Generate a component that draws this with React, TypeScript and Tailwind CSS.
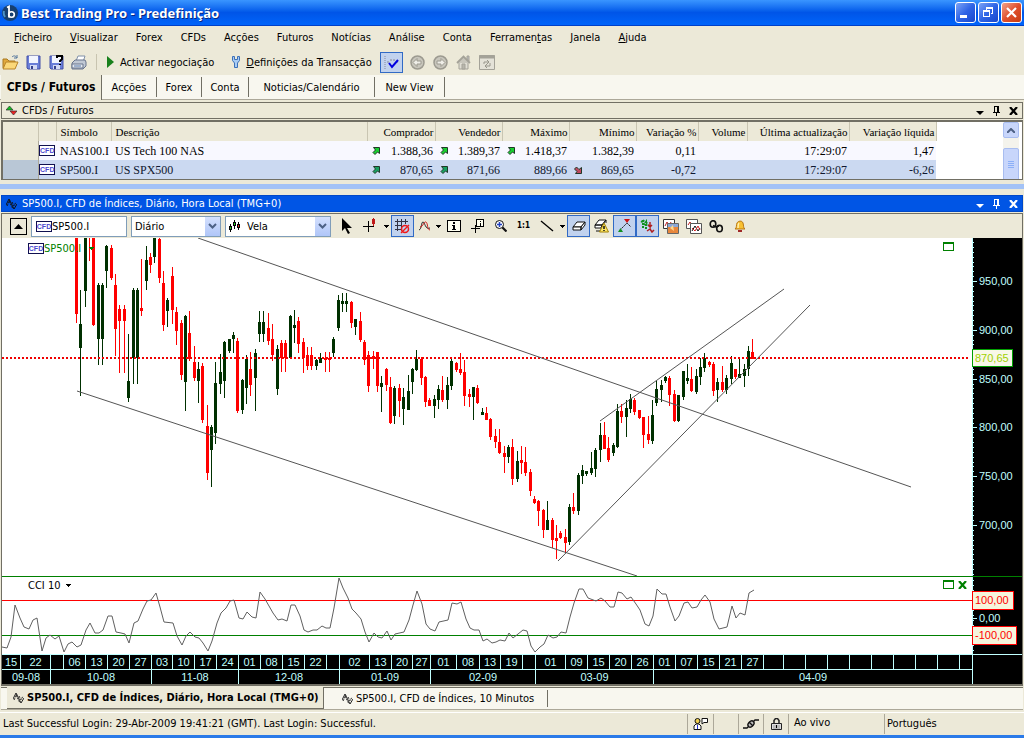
import React from 'react';
import clsx from 'clsx';

// x, high, body top, body bottom, low, rising
type Candle = [number, number, number, number, number, 0 | 1];

const CANDLES: Candle[] = [
  [76, 238, 238, 314, 323, 0], [80, 290, 324, 348, 396, 1], [85, 238, 238, 291, 307, 1], [89, 238, 238, 238, 261, 0],
  [93, 238, 238, 325, 326, 0], [98, 283, 285, 339, 365, 1], [102, 283, 285, 339, 365, 1], [106, 245, 246, 271, 288, 1],
  [111, 245, 248, 278, 280, 0], [115, 274, 285, 329, 356, 0], [119, 305, 309, 321, 373, 0], [124, 305, 309, 321, 373, 0],
  [128, 334, 381, 398, 402, 1], [133, 288, 290, 358, 384, 1], [137, 288, 290, 358, 384, 1], [141, 259, 308, 311, 316, 0],
  [146, 246, 260, 281, 290, 1], [150, 253, 257, 265, 273, 0], [154, 238, 238, 257, 263, 1], [159, 238, 239, 278, 283, 0],
  [163, 271, 283, 325, 331, 0], [167, 298, 300, 311, 327, 1], [172, 267, 276, 310, 324, 0], [176, 307, 312, 331, 345, 0],
  [181, 320, 323, 375, 380, 0], [185, 315, 316, 382, 411, 1], [189, 311, 333, 359, 361, 0], [194, 346, 362, 378, 381, 0],
  [198, 362, 369, 381, 403, 1], [202, 363, 366, 420, 423, 0], [207, 405, 426, 473, 480, 0], [211, 425, 427, 450, 487, 1],
  [215, 362, 383, 433, 444, 1], [220, 354, 372, 384, 394, 1], [224, 341, 342, 381, 398, 1], [229, 339, 339, 351, 353, 1],
  [233, 332, 335, 339, 353, 1], [237, 338, 341, 411, 413, 0], [242, 379, 380, 410, 414, 1], [246, 355, 359, 388, 404, 1],
  [250, 352, 369, 385, 396, 0], [255, 349, 353, 378, 411, 1], [259, 311, 322, 334, 342, 1], [263, 311, 322, 334, 342, 1],
  [268, 313, 328, 341, 345, 0], [272, 324, 339, 355, 361, 0], [277, 345, 349, 389, 395, 1], [281, 340, 343, 358, 372, 0],
  [285, 340, 343, 358, 372, 0], [290, 315, 316, 358, 359, 1], [294, 310, 325, 328, 343, 1], [298, 317, 321, 344, 353, 0],
  [303, 338, 342, 358, 373, 0], [307, 347, 355, 366, 370, 0], [311, 347, 355, 366, 370, 0], [316, 359, 360, 366, 370, 1],
  [320, 353, 358, 363, 363, 1], [325, 352, 358, 360, 372, 0], [329, 352, 358, 360, 372, 0], [333, 337, 339, 353, 357, 1],
  [338, 295, 300, 328, 331, 1], [342, 293, 301, 304, 312, 1], [346, 293, 301, 304, 312, 1], [351, 301, 302, 323, 328, 0],
  [355, 319, 319, 327, 335, 1], [360, 312, 321, 340, 342, 0], [364, 340, 342, 360, 365, 0], [368, 351, 355, 386, 392, 0],
  [373, 351, 356, 359, 369, 0], [377, 352, 352, 386, 392, 0], [381, 376, 383, 387, 412, 1], [386, 368, 369, 385, 391, 0],
  [390, 377, 387, 423, 424, 0], [394, 386, 388, 416, 424, 1], [399, 384, 388, 401, 417, 0], [403, 388, 397, 409, 425, 1],
  [408, 375, 391, 410, 410, 1], [412, 368, 369, 382, 394, 1], [416, 350, 359, 370, 371, 1], [421, 357, 359, 378, 385, 0],
  [425, 376, 377, 402, 407, 0], [429, 398, 400, 406, 406, 0], [434, 395, 399, 406, 418, 1], [438, 385, 389, 400, 409, 1],
  [442, 376, 390, 400, 402, 0], [447, 377, 385, 400, 409, 1], [451, 359, 361, 386, 390, 1], [456, 362, 363, 370, 372, 0],
  [460, 353, 369, 373, 375, 0], [464, 360, 372, 396, 406, 0], [469, 389, 394, 397, 407, 0], [473, 387, 387, 397, 420, 1],
  [477, 385, 388, 403, 404, 0], [482, 408, 412, 415, 415, 1], [486, 407, 413, 420, 420, 0], [490, 418, 419, 437, 440, 0],
  [495, 429, 436, 442, 448, 0], [499, 429, 442, 453, 454, 0], [504, 446, 453, 457, 473, 0], [508, 445, 447, 457, 463, 1],
  [512, 439, 447, 479, 485, 0], [517, 451, 461, 479, 482, 1], [521, 446, 460, 463, 474, 0], [525, 447, 462, 473, 476, 0],
  [530, 469, 472, 491, 496, 0], [534, 496, 499, 503, 504, 0], [538, 500, 501, 511, 526, 0], [543, 509, 510, 530, 538, 0],
  [547, 501, 520, 530, 530, 1], [552, 518, 520, 540, 548, 0], [556, 525, 538, 541, 559, 0], [560, 531, 533, 538, 539, 0],
  [565, 529, 537, 543, 553, 0], [569, 504, 507, 542, 545, 1], [573, 493, 507, 511, 514, 0], [578, 473, 475, 511, 515, 1],
  [582, 465, 470, 476, 484, 1], [586, 471, 471, 474, 476, 1], [591, 452, 468, 473, 475, 1], [595, 448, 450, 469, 477, 1],
  [600, 423, 435, 450, 462, 1], [604, 422, 435, 449, 449, 0], [608, 437, 448, 460, 462, 0], [613, 443, 445, 453, 456, 1],
  [617, 404, 411, 447, 448, 1], [621, 404, 411, 417, 423, 0], [626, 400, 408, 417, 437, 1], [630, 394, 399, 409, 413, 1],
  [634, 398, 400, 412, 415, 0], [639, 410, 410, 418, 419, 0], [643, 417, 417, 435, 448, 0], [648, 416, 434, 440, 444, 0],
  [652, 400, 415, 441, 444, 1], [656, 381, 389, 403, 406, 1], [661, 380, 385, 390, 402, 1], [665, 376, 377, 381, 383, 1],
  [669, 376, 378, 395, 406, 0], [674, 390, 394, 421, 422, 0], [678, 395, 395, 421, 422, 1], [683, 371, 371, 397, 400, 1],
  [687, 364, 378, 381, 384, 1], [691, 367, 379, 391, 392, 0], [696, 369, 376, 392, 394, 1], [700, 358, 367, 377, 385, 1],
  [704, 353, 358, 368, 372, 1], [709, 361, 362, 365, 367, 0], [713, 362, 364, 391, 396, 0], [717, 378, 382, 390, 402, 1],
  [722, 366, 382, 390, 392, 0], [726, 375, 378, 390, 394, 1], [731, 356, 363, 379, 384, 1], [735, 369, 369, 377, 379, 0],
  [739, 359, 374, 378, 378, 1], [744, 364, 369, 376, 387, 1], [748, 346, 351, 369, 376, 1], [752, 339, 352, 359, 359, 0],
];

const CCI_POINTS =
  '2,647 7,648 11,637 15,605 20,618 24,627 29,629 33,620 37,618 42,651 46,638 50,635 55,639 59,636 64,652 68,644 72,642 77,647 ' +
  '81,645 86,630 90,623 95,633 99,633 103,630 108,616 112,616 116,632 121,633 125,634 129,643 134,623 138,621 143,609 147,601 ' +
  '151,600 156,593 160,607 164,622 173,623 177,636 182,645 186,636 190,632 195,637 199,638 203,643 208,651 212,641 217,623 ' +
  '221,613 226,608 230,601 234,600 239,618 243,619 247,612 252,617 256,618 260,592 265,599 269,606 273,613 278,620 282,619 ' +
  '287,621 291,605 295,605 300,616 304,630 308,632 313,630 317,630 322,626 326,628 330,628 334,608 339,578 343,588 348,598 ' +
  '352,609 356,613 361,619 365,632 369,642 374,633 378,637 382,638 387,631 391,640 395,634 404,632 409,620 413,605 417,591 ' +
  '422,604 426,624 430,629 435,631 439,622 448,620 452,603 457,604 461,602 466,619 470,628 474,630 479,630 483,641 487,639 ' +
  '492,643 496,642 500,640 505,641 509,633 513,638 518,634 523,630 527,631 531,646 535,652 540,647 544,644 548,635 553,638 ' +
  '557,637 561,632 566,633 570,617 574,603 579,589 583,589 588,598 596,601 601,598 605,601 610,607 614,607 618,592 622,593 ' +
  '627,599 631,597 636,604 640,610 645,624 649,626 653,616 657,589 662,594 666,594 670,607 675,621 679,616 684,603 688,602 ' +
  '692,608 697,607 701,600 705,595 710,602 714,619 719,629 723,628 727,627 732,606 736,618 740,613 745,615 749,593 754,590';

// label, width
const WEEKS: [string, number][] = [
  ['15', 19], ['22', 30], ['', 13], ['06', 22], ['13', 22], ['20', 22], ['27', 22], ['03', 21], ['10', 22], ['17', 22],
  ['24', 22], ['01', 22], ['08', 22], ['15', 22], ['22', 22], ['', 13], ['02', 30], ['13', 22], ['20', 21], ['27', 18],
  ['01', 26], ['08', 23], ['13', 21], ['19', 22], ['', 13], ['01', 30], ['09', 22], ['15', 22], ['20', 22], ['26', 22],
  ['01', 22], ['07', 22], ['15', 22], ['21', 22], ['27', 22], ['', 20], ['', 22], ['', 22], ['', 22], ['', 22], ['', 22],
  ['', 22], ['', 22], ['', 22],
];

const MONTHS: [string, number][] = [
  ['09-08', 49], ['10-08', 101], ['11-08', 87], ['12-08', 101], ['01-09', 91], ['02-09', 105], ['03-09', 118],
];

const MENU: [string, string, string][] = [
  ['', 'F', 'icheiro'], ['', 'V', 'isualizar'], ['Forex', '', ''], ['CFDs', '', ''], ['Acções', '', ''], ['Futuros', '', ''],
  ['Notícias', '', ''], ['Análise', '', ''], ['Conta', '', ''], ['Ferramen', 't', 'as'], ['', 'J', 'anela'], ['', 'A', 'juda'],
];

const Caret = ({ className }: { className?: string }) => (
  <svg width="5" height="3" viewBox="0 0 5 3" className={className} shapeRendering="crispEdges">
    <path d="M0 0h5v1H4v1H3v1H2V2H1V1H0z" fill="currentColor" />
  </svg>
);

const WaveIcon = ({ color = '#000' }: { color?: string }) => (
  <svg width="11" height="12" viewBox="0 0 11 12" fill="none" stroke={color}>
    <path d="M0 7l3-6 2 4 3 6 3-5" />
    <path d="M1 8l3-6M3 3l4 8M6 4l2 4 2-4" strokeDasharray="2 1" />
  </svg>
);

const CfdBadge = () => (
  <span className="inline-flex h-[11px] w-4 shrink-0 items-center justify-center border border-[#101050] bg-white text-[7px] leading-none font-bold text-[#4a4ad0] font-['Liberation_Sans',sans-serif]">
    CFD
  </span>
);

const Arrow = ({ down, dim }: { down?: boolean; dim?: boolean }) => (
  <svg width="8" height="8" viewBox="0 0 8 8" className={down ? 'rotate-90' : ''} aria-hidden="true">
    <path d="M1.500 0.500h6v6l-2-1.500-2.500 2.500-2-2L3.500 3z" fill={down ? '#c04860' : dim ? '#18a060' : '#18d030'} stroke="#203828" />
  </svg>
);

const PanelButtons = () => (
  <div className="flex items-center gap-2 pr-1">
    <button aria-label="Opções" className="flex w-2 justify-center pt-1">
      <svg width="8" height="4" viewBox="0 0 8 4"><path d="M0 0h8L4 4z" fill="currentColor" /></svg>
    </button>
    <button aria-label="Fixar">
      <svg width="9" height="10" viewBox="0 0 9 10" fill="currentColor" shapeRendering="crispEdges">
        <path d="M2 0h5v6h1v1H5v3H4V7H1V6h1zM3 1v5h2V1z" fillRule="evenodd" />
      </svg>
    </button>
    <button aria-label="Fechar">
      <svg width="9" height="8" viewBox="0 0 9 8" stroke="currentColor" strokeWidth="2.2"><path d="M1 0l7 8M8 0L1 8" /></svg>
    </button>
  </div>
);

const TitleBar = () => (
  <header className="flex h-[26px] items-center justify-between bg-linear-to-b from-[#3a95ff] via-[#0055e8] to-[#0064fa] border-b border-[#0040c8] pr-[2px] pl-[2px]">
    <div className="flex items-center gap-[3px]">
      <svg width="16" height="16" viewBox="0 0 16 16">
        <circle cx="8" cy="8" r="8" fill="#17406f" />
        <path d="M3 12a7 7 0 0 1-1-6" stroke="#4c93c8" strokeWidth="2" fill="none" />
        <path d="M5 2.500l2-1v11" stroke="#fff" strokeWidth="1.800" fill="none" />
        <circle cx="9.500" cy="9.500" r="2.800" stroke="#fff" strokeWidth="1.600" fill="none" />
      </svg>
      <h1 className="text-[13px] leading-4 font-bold text-white [text-shadow:1px_1px_#0a2a80] font-['Noto_Sans',sans-serif]">
        Best Trading Pro - Predefinição
      </h1>
    </div>
    <div className="flex gap-[2px]">
      <button aria-label="Minimizar" className="h-[21px] w-[21px] rounded-[3px] border border-white bg-linear-to-br from-[#7da2f5] via-[#2f64e6] to-[#1846cc]">
        <svg width="19" height="19" viewBox="0 0 19 19"><path d="M4 12h7v3H4z" fill="#fff" /></svg>
      </button>
      <button aria-label="Restaurar" className="h-[21px] w-[21px] rounded-[3px] border border-white bg-linear-to-br from-[#7da2f5] via-[#2f64e6] to-[#1846cc]">
        <svg width="19" height="19" viewBox="0 0 19 19" fill="#fff" fillRule="evenodd" shapeRendering="crispEdges">
          <path d="M4 7h7v7H4zM5 9v4h5V9z" />
          <path d="M7 4h7v7h-2v-1h1V6H8v1H7z" />
        </svg>
      </button>
      <button aria-label="Fechar janela" className="h-[21px] w-[21px] rounded-[3px] border border-white bg-linear-to-br from-[#f0a088] via-[#e0502c] to-[#c83c10]">
        <svg width="19" height="19" viewBox="0 0 19 19"><path d="M5 5l9 9M14 5l-9 9" stroke="#fff" strokeWidth="2.200" /></svg>
      </button>
    </div>
  </header>
);

const FloppyIcon = ({ help }: { help?: boolean }) => (
  <svg width="15" height="15" viewBox="0 0 15 15">
    <path d="M1 1h13v13H2l-1-1z" fill="#6a7ed8" stroke="#4450a8" />
    <path d="M3 1h9v7H3z" fill="#f2f5ff" />
    <path d="M4 10h7v4H4z" fill="#d4daf4" />
    <path d="M5 11h2v3H5z" fill="#34408c" />
    {help && <path d="M8 3V1h5v3l-2 2v1M11 9v1" stroke="#000" strokeWidth="2" fill="none" />}
  </svg>
);

const MainToolbar = () => (
  <div className="flex h-[26px] items-center pl-[2px]">
    <button aria-label="Abrir" className="w-6">
      <svg width="17" height="15" viewBox="0 0 17 15">
        <path d="M1 13V4h4l2 2h6v7z" fill="#e0a83c" stroke="#a87820" />
        <path d="M1 14l3-7h12l-3 7z" fill="#fbd878" stroke="#b88428" />
        <path d="M10 2c2-2 4-1 5 1m0-3v3h-3" stroke="#50749c" fill="none" />
      </svg>
    </button>
    <button aria-label="Guardar" className="w-[23px]"><FloppyIcon /></button>
    <button aria-label="Guardar como" className="w-[22px]"><FloppyIcon help /></button>
    <button aria-label="Imprimir" className="w-6">
      <svg width="16" height="15" viewBox="0 0 16 15">
        <path d="M5 6l2-5h7l-2 6z" fill="#fff" stroke="#8090a8" />
        <path d="M1 8l3-3h10l1 2v4l-3 3H1z" fill="#c0c8d4" stroke="#68748c" />
        <path d="M1 9h11v4H1z" fill="#e4e9f0" stroke="#68748c" />
        <path d="M3 11h7" stroke="#5878a8" />
      </svg>
    </button>
    <span className="mx-px h-4 w-px bg-[#c8c4b0]" />
    <button className="flex items-center gap-[6px] pl-[9px]">
      <svg width="7" height="12" viewBox="0 0 7 12"><path d="M0 0l7 6-7 6z" fill="#18801c" /></svg>
      Activar negociação
    </button>
    <button className="flex items-center gap-[6px] pl-[18px]">
      <svg width="8" height="12" viewBox="0 0 8 12">
        <path d="M0.500 0.500h2v3h3v-3h2v4L5.500 7v4.500h-3V7L0.500 4.500z" fill="#a8ccf4" stroke="#3c70b8" />
      </svg>
      <span><u>D</u>efinições da Transacção</span>
    </button>
    <button aria-label="Confirmar" aria-pressed="true" className="ml-2 flex h-[21px] w-[23px] items-center justify-center border border-[#316ac5] bg-[#c1d2ee]">
      <svg width="17" height="15" viewBox="0 0 17 15" fill="none">
        <path d="M2 1v14" stroke="#889" strokeDasharray="1 1" /><path d="M4 7h3M13 7h3M7 5h6" stroke="#889" strokeDasharray="2 1" />
        <path d="M6 8l3 4 6-7" stroke="#0000e0" strokeWidth="2" />
      </svg>
    </button>
    <div className="ml-[7px] flex gap-2">
      <button aria-label="Anterior">
        <svg width="15" height="15" viewBox="0 0 15 15" stroke="#9c9a90">
          <circle cx="7.500" cy="7.500" r="6.500" fill="#c8c6bc" strokeWidth="1.500" />
          <path d="M3 7.500l4-4v2.500h4v3H7v2.500z" fill="#efeee8" />
        </svg>
      </button>
      <button aria-label="Seguinte">
        <svg width="15" height="15" viewBox="0 0 15 15" stroke="#9c9a90">
          <circle cx="7.500" cy="7.500" r="6.500" fill="#c8c6bc" strokeWidth="1.500" />
          <path d="M12 7.500l-4-4v2.500H4v3h4v2.500z" fill="#efeee8" />
        </svg>
      </button>
      <button aria-label="Início">
        <svg width="15" height="15" viewBox="0 0 15 15" stroke="#a4a298">
          <path d="M11 1h2v5h-2z" fill="#bbb" /><path d="M3 7h9v7H3z" fill="#e0ded4" />
          <path d="M1 8l6.500-6.500L14 8" fill="#c8c6bc" strokeWidth="1.800" /><path d="M6 9h3v5H6z" fill="#b8b6ac" />
        </svg>
      </button>
      <button aria-label="Actualizar">
        <svg width="16" height="15" viewBox="0 0 16 15" stroke="#a4a298" fill="none">
          <path d="M0.500 0.500h15v14h-15z" fill="#e4e2d8" /><path d="M0 2h16" strokeWidth="3" />
          <path d="M5 9V7h5m-2-2l2 2-2 2M11 8v3H6m2-2l-2 2 2 2" stroke="#98968c" />
        </svg>
      </button>
    </div>
  </div>
);

const VIEW_TABS = [
  { label: 'Acções', width: 'w-[55px]' },
  { label: 'Forex', width: 'w-[45px]' },
  { label: 'Conta', width: 'w-[47px]' },
  { label: 'Noticias/Calendário', width: 'w-[126px]' },
  { label: 'New View', width: 'w-[70px]' },
];

const ViewTabs = () => (
  <nav className="flex h-[25px] items-stretch border-b border-[#aca899] bg-[#f8f7ef] pl-px">
    <button className="-mb-px w-[101px] border-r border-[#716f64] bg-[#ece9d8] text-[12px] font-bold">CFDs / Futuros</button>
    {VIEW_TABS.map((tab) => (
      <button key={tab.label} className={clsx('my-[2px] border-r border-[#716f64]', tab.width)}>{tab.label}</button>
    ))}
  </nav>
);

type Cell = { value: string; arrow?: 'up' | 'down' };
type Quote = { symbol: string; name: string; cells: Cell[]; selected?: boolean };

const QUOTES: Quote[] = [
  {
    symbol: 'NAS100.I',
    name: 'US Tech 100 NAS',
    cells: [
      { value: '1.388,36', arrow: 'up' }, { value: '1.389,37', arrow: 'up' }, { value: '1.418,37', arrow: 'up' }, { value: '1.382,39' },
      { value: '0,11' }, { value: '' }, { value: '17:29:07' }, { value: '1,47' },
    ],
  },
  {
    symbol: 'SP500.I',
    name: 'US SPX500',
    selected: true,
    cells: [
      { value: '870,65', arrow: 'up' }, { value: '871,66', arrow: 'up' }, { value: '889,66' }, { value: '869,65', arrow: 'down' },
      { value: '-0,72' }, { value: '' }, { value: '17:29:07' }, { value: '-6,26' },
    ],
  },
];

const HEADINGS = ['Comprador', 'Vendedor', 'Máximo', 'Mínimo', 'Variação %', 'Volume', 'Última actualização', 'Variação líquida'];

const QuotesPanel = () => (
  <section className="mx-px flex h-[60px] border border-t-2 border-l-2 border-[#716f64] bg-white">
    <div className="flex-1 overflow-hidden">
      <table className="w-[933px] table-fixed border-collapse text-[12px] leading-4 font-['Liberation_Serif',serif]">
        <colgroup>
          <col className="w-[35px]" />
          <col className="w-[18px]" />
          <col className="w-[55px]" />
          <col className="w-[256px]" />
          <col className="w-[68px]" />
          <col className="w-[67px]" />
          <col className="w-[67px]" />
          <col className="w-[67px]" />
          <col className="w-[62px]" />
          <col className="w-[49px]" />
          <col className="w-[102px]" />
          <col className="w-[87px]" />
        </colgroup>
        <thead>
          <tr className="h-[19px] bg-[#ece9d8] text-[11px]">
            <td className="border-r border-[#c9c5b2]" />
            <td className="border-r border-[#c9c5b2]" />
            <th className="border-r border-[#c9c5b2] pl-1 text-left font-normal">Símbolo</th>
            <th className="border-r border-[#c9c5b2] pl-1 text-left font-normal">Descrição</th>
            {HEADINGS.map((h) => (
              <th key={h} className="border-r border-[#c9c5b2] pr-px text-right font-normal whitespace-nowrap">{h}</th>
            ))}
          </tr>
        </thead>
        <tbody>
          {QUOTES.map((q) => (
            <tr key={q.symbol} className={clsx('h-[19px]', q.selected ? 'bg-[#cbd9f1] text-[#101830]' : 'bg-[#f8f8ff]')}>
              <td className={clsx('border-r border-[#aca899]', q.selected ? 'bg-[#b9c7d6]' : 'bg-[#ece9d8]')} />
              <td><div className="flex justify-center"><CfdBadge /></div></td>
              <td className="pl-1">{q.symbol}</td>
              <td className="pl-1">{q.name}</td>
              {q.cells.map((c, i) => (
                <td key={i} className="pr-[2px] pl-[5px]">
                  <div className="flex items-center justify-between">
                    {c.arrow ? <Arrow down={c.arrow === 'down'} dim={q.selected} /> : <i />}
                    <span>{c.value}</span>
                  </div>
                </td>
              ))}
            </tr>
          ))}
        </tbody>
      </table>
    </div>
    <div className="mr-[3px] flex w-4 flex-col overflow-hidden bg-[#f4f3ec]">
      <button aria-label="Subir" className="flex h-4 shrink-0 items-center justify-center rounded-[2px] border border-[#a8bdf0] bg-[#c8d6fb]">
        <svg width="8" height="5" viewBox="0 0 8 5" fill="none" stroke="#4d6185" strokeWidth="2"><path d="M0 5l4-4 4 4" /></svg>
      </button>
      <div className="mt-[10px] flex h-10 shrink-0 flex-col items-center gap-px rounded-[2px] border border-[#a8bdf0] bg-[#c8d6fb] pt-3">
        <i className="h-px w-[6px] bg-[#8cb0f8]" />
        <i className="h-px w-[6px] bg-[#8cb0f8]" />
        <i className="h-px w-[6px] bg-[#8cb0f8]" />
        <i className="h-px w-[6px] bg-[#8cb0f8]" />
      </div>
    </div>
  </section>
);

const SelectArrow = () => (
  <span className="pointer-events-none absolute top-px right-px bottom-px flex w-[15px] items-center justify-center bg-linear-to-b from-[#d4e0fd] to-[#b0c6f8]">
    <svg width="9" height="6" viewBox="0 0 9 6" fill="none" stroke="#4d6185" strokeWidth="2"><path d="M1 1l3.500 3.500L8 1" /></svg>
  </span>
);

const CandlesIcon = () => (
  <svg width="12" height="12" viewBox="0 0 12 12" shapeRendering="crispEdges">
    <path d="M1 4h1v8H1zM5 0h1v9H5zM9 2h1v8H9z" />
    <path d="M0 6h3v4H0zM4 2h3v4H4zM8 4h3v4H8z" />
    <path d="M1 7h1v2H1zM5 3h1v2H5z" fill="#20d020" /><path d="M9 5h1v2H9z" fill="#e02020" />
  </svg>
);

type ToolProps = { label: string; on?: boolean; width?: string; caret?: boolean; children: React.ReactNode };

const Tool = ({ label, on, width = 'w-[23px]', caret, children }: ToolProps) => (
  <button
    aria-label={label}
    aria-pressed={on}
    className={clsx(
      'flex h-[22px] shrink-0 items-center border',
      width,
      caret ? 'justify-between pr-px pl-1' : 'justify-center',
      on ? 'border-[#316ac5] bg-[#c1d2ee]' : 'border-transparent'
    )}
  >
    {children}
    {caret && <Caret />}
  </button>
);

const ChartToolbar = () => (
  <div className="flex h-6 items-center overflow-hidden bg-[#ece9d8] pl-2">
    <button aria-label="Recolher" className="mr-1 flex h-[17px] w-[17px] items-center justify-center border border-black">
      <svg width="9" height="5" viewBox="0 0 9 5"><path d="M0 5h9L4.500 0z" /></svg>
    </button>
    <label className="mr-1 flex h-[21px] w-24 items-center border border-[#7f9db9] bg-white pl-1">
      <CfdBadge />
      <input aria-label="Símbolo" defaultValue="SP500.I" className="w-full min-w-0 bg-transparent outline-none" />
    </label>
    <div className="relative mr-1 h-[21px] w-[90px]">
      <select aria-label="Período" className="h-full w-full appearance-none border border-[#7f9db9] bg-white pl-[3px]">
        <option>Diário</option>
      </select>
      <SelectArrow />
    </div>
    <div className="relative mr-1 h-[21px] w-[106px]">
      <select aria-label="Tipo de gráfico" className="h-full w-full appearance-none border border-[#7f9db9] bg-white pl-[21px]">
        <option>Vela</option>
      </select>
      <span className="pointer-events-none absolute top-1 left-1"><CandlesIcon /></span>
      <SelectArrow />
    </div>
    <Tool label="Seleccionar">
      <svg width="12" height="16" viewBox="0 0 12 16"><path d="M1 0v13l3-3 3 6 2-1-3-5h5z" /></svg>
    </Tool>
    <Tool label="Mira" width="w-[33px]" caret>
      <svg width="14" height="16" viewBox="0 0 14 16" shapeRendering="crispEdges">
        <path d="M0 8h11v1H0zM5 3h1v11H5z" />
        <path d="M9 1h3v5H9zM10 0h1v8h-1z" fill="#c01818" />
      </svg>
    </Tool>
    <Tool label="Grelha" on>
      <svg width="15" height="15" viewBox="0 0 15 15" fill="none">
        <path d="M2 0h1v12H2zM6 0h1v12H6zM10 0h1v5h-1zM0 2h13v1H0zM0 6h7v1H0zM0 10h6v1H0z" fill="#334" shapeRendering="crispEdges" />
        <circle cx="10" cy="10" r="3.500" stroke="#f01818" strokeWidth="1.500" /><path d="M6 14l8-8" stroke="#f01818" strokeWidth="1.300" />
      </svg>
    </Tool>
    <Tool label="Indicadores" width="w-[29px]" caret>
      <svg width="12" height="12" viewBox="0 0 12 12" fill="none">
        <path d="M0 10c3-1 2-8 4-8s2 8 7 6" stroke="#222" /><path d="M1 7c3 0 4-6 6-5s1 8 4 8" stroke="#d02020" />
      </svg>
    </Tool>
    <Tool label="Informação">
      <svg width="15" height="13" viewBox="0 0 15 13" shapeRendering="crispEdges">
        <path d="M0.500 0.500h13v11h-13z" fill="#fffff0" stroke="#000" />
        <path d="M6 2h2v2H6zM5 5h3v4h1v1H5V9h1V6H5z" />
      </svg>
    </Tool>
    <Tool label="Anotação">
      <svg width="14" height="14" viewBox="0 0 14 14" shapeRendering="crispEdges">
        <path d="M5.500 0.500h7v7h-7z" fill="#fffff0" stroke="#000" /><path d="M9 2h1v1H9zM9 4h1v3H9zM0 9h9v1H0zM4 6h1v8H4z" />
      </svg>
    </Tool>
    <Tool label="Ampliar">
      <svg width="12" height="12" viewBox="0 0 12 12" fill="none" stroke="#111">
        <circle cx="4.500" cy="4.500" r="4" fill="#fff" /><path d="M2 4.500h5M4.500 2v5" stroke="#2040c0" strokeWidth="1.500" />
        <path d="M7.500 7.500l4 4" strokeWidth="2.200" />
      </svg>
    </Tool>
    <Tool label="Escala original"><span className="text-[8px] leading-none font-bold">1:1</span></Tool>
    <Tool label="Linha" width="w-8" caret>
      <svg width="14" height="12" viewBox="0 0 14 12"><path d="M1 1l12 10" stroke="#000" strokeWidth="1.300" /></svg>
    </Tool>
    <Tool label="Borracha" on>
      <svg width="14" height="10" viewBox="0 0 14 10" fill="#fff" stroke="#111">
        <path d="M1 6l4-5h8L9 6z" /><path d="M1 6v3h8V6zM9 9l4-5V1L9 6z" />
      </svg>
    </Tool>
    <Tool label="Apagar tudo">
      <svg width="15" height="14" viewBox="0 0 15 14" fill="#fff" stroke="#111">
        <path d="M1 6l4-5h7L8 6zM1 6v3h6l1-3zM8 6l4-5v3" /><path d="M2 12h4" fill="none" />
        <path d="M10 4l4.500 9H5.500z" fill="#ffe868" stroke="#a08000" /><path d="M10 7v3M10 11v1" strokeWidth="1.500" />
      </svg>
    </Tool>
    <Tool label="Tendência" on>
      <svg width="14" height="14" viewBox="0 0 14 14">
        <path d="M2 11l7-7 4 4" stroke="#111" fill="none" strokeDasharray="2 1" />
        <path d="M0 13h5L2.500 9z" fill="#109020" /><path d="M6 0h6L9 4z" fill="#d01010" />
      </svg>
    </Tool>
    <Tool label="Ordens" on>
      <svg width="15" height="14" viewBox="0 0 15 14" fill="none" strokeWidth="1.500">
        <path d="M3 9V1L1 4M3 1l2 3M6 10V3L4 6M6 3l2 3" stroke="#109020" strokeDasharray="2 1" strokeWidth="2" />
        <path d="M10 3v5L8 6M10 8l2-2M7 12l3-2 2 3 2-2" stroke="#b02020" />
      </svg>
    </Tool>
    <Tool label="Copiar gráfico">
      <svg width="16" height="15" viewBox="0 0 16 15" fill="#fff" stroke="#333">
        <path d="M0.500 0.500h11v9H0.500z" /><path d="M2 7l2-4 2 4 2-4" fill="none" stroke="#c02020" />
        <path d="M4.500 4.500h11v10h-11z" fill="#e8873c" stroke="#666" /><path d="M5 5h10v3H5z" fill="#8aa8d8" stroke="none" />
        <path d="M7 9l3-3 1 6z" fill="#fbd890" stroke="none" />
      </svg>
    </Tool>
    <Tool label="Duplicar gráfico">
      <svg width="16" height="15" viewBox="0 0 16 15" fill="#fff" stroke="#555">
        <path d="M0.500 0.500h11v9H0.500z" /><path d="M2 6l2-3 2 3" fill="none" stroke="#c02020" />
        <path d="M4.500 4.500h11v10h-11z" /><path d="M6 12l3-5 3 5 2-3" fill="none" stroke="#111" /><path d="M6 9l3 3 3-5 2 4" fill="none" stroke="#d02020" />
      </svg>
    </Tool>
    <Tool label="Ligar">
      <svg width="15" height="13" viewBox="0 0 15 13" fill="none" stroke="#111" strokeWidth="1.600">
        <ellipse cx="4" cy="4" rx="2.800" ry="3.300" /><ellipse cx="10.500" cy="8.500" rx="2.800" ry="3.300" /><path d="M4 5.500l3 1.500 3-1" />
      </svg>
    </Tool>
    <Tool label="Alerta">
      <svg width="12" height="12" viewBox="0 0 12 12">
        <path d="M1 9c2-1 1-4 2-6s5-3 6 0 0 5 2 6z" fill="#f8c030" stroke="#b87818" />
        <path d="M5 3c-1 1-1 3-1 5" stroke="#fff0b0" strokeWidth="1.500" fill="none" />
        <path d="M4 10h4v2H4z" fill="#a02828" />
      </svg>
    </Tool>
  </div>
);

const RISE = '#003000';
const FALL = '#ff0000';

// plot coordinates share the window's origin, so the group shifts them back into the svg
const PriceChart = () => (
  <svg className="block h-[338px] w-full bg-white" role="img" aria-label="SP500.I diário">
    <g transform="translate(-2 -238)">
      <g shapeRendering="crispEdges">
        {CANDLES.map(([x, high, top, bottom, low, up]) => (
          <g key={x} fill={up ? RISE : FALL}>
            <rect x={x} y={high} width="1" height={low - high} />
            <rect x={x - 1} y={top} width="3" height={bottom - top} />
          </g>
        ))}
        <line x1="2" x2="100%" y1="358" y2="358" stroke="#f00000" strokeWidth="2" strokeDasharray="2 2" />
      </g>
      <path d="M198 238L911 487M77 391L637 576M558 561L810 305M600 421L784 289" stroke="#555" fill="none" />
    </g>
  </svg>
);

const PRICES = ['950,00', '900,00', '850,00', '800,00', '750,00', '700,00'];
const priceTicks = Array.from({ length: 69 }, (_, i) => Math.round(242 + i * 4.88));
const cciTicks = Array.from({ length: 15 }, (_, i) => 580 + i * 5);

const PriceAxis = () => (
  <svg className="block h-[416px] w-[50px] shrink-0 bg-black text-[11px] font-['Liberation_Sans',sans-serif]" fill="#c0ffff">
    <g transform="translate(0 -238)">
      <rect x="0" y="238" width="1" height="416" />
      {priceTicks.map((y) => <rect key={y} x="1" y={y} width="1" height="1" />)}
      {cciTicks.map((y) => <rect key={y} x="1" y={y} width="1" height="1" />)}
      {PRICES.map((p, i) => (
        <g key={p}>
          <rect x="1" y={Math.round(281 + i * 48.8)} width="4" height="1" />
          <text x="7" y={Math.round(285 + i * 48.8)}>{p}</text>
        </g>
      ))}
      <rect x="0" y="576" width="50" height="1" fill="#008000" />
      <rect x="1" y="618" width="4" height="1" />
      <text x="7" y="622">0,00</text>
      <g strokeWidth="1">
        <rect x="0.500" y="349.500" width="40" height="17" fill="#f8f8e8" stroke="#00a000" />
        <rect x="0.500" y="591.500" width="41" height="18" fill="#f5f5dc" stroke="#ff0000" />
        <rect x="0.500" y="626.500" width="44" height="18" fill="#f5f5dc" stroke="#ff0000" />
      </g>
      <text x="3" y="362" fill="#a0d000">870,65</text>
      <text x="3" y="604" fill="#ff0000">100,00</text>
      <text x="3" y="639" fill="#ff0000">-100,00</text>
    </g>
  </svg>
);

const CciChart = () => (
  <svg className="block h-[77px] w-full bg-white" role="img" aria-label="CCI 10">
    <g transform="translate(-2 -577)">
      <rect x="2" y="600" width="100%" height="1" fill="#ff0000" />
      <rect x="2" y="635" width="100%" height="1" fill="#008000" />
      <polyline points={CCI_POINTS} fill="none" stroke="#606060" />
    </g>
  </svg>
);

const DateAxis = () => (
  <div className="flex border-t border-[#c0ffff] bg-black text-[11px] leading-[14px] text-[#c0ffff] font-['Liberation_Sans',sans-serif]">
    <div className="min-w-0 flex-1 overflow-hidden border-r border-[#c0ffff]">
      <div className="flex h-[15px] border-b border-[#c0ffff]">
        {WEEKS.map(([label, width], i) => (
          <span key={i} style={{ width }} className="shrink-0 border-r border-[#c0ffff] text-center">{label}</span>
        ))}
      </div>
      <div className="flex h-[14px]">
        {MONTHS.map(([label, width]) => (
          <span key={label} style={{ width }} className="shrink-0 border-r border-[#c0ffff] text-center">{label}</span>
        ))}
        <span className="flex-1 text-center">04-09</span>
      </div>
    </div>
    <div className="w-[49px] shrink-0" />
  </div>
);

const MaximizeIcon = () => (
  <svg width="11" height="9" viewBox="0 0 11 9" fill="none" stroke="#008000" shapeRendering="crispEdges">
    <path d="M0.500 0.500h10v8h-10z" /><path d="M0 1h11" strokeWidth="2" />
  </svg>
);

const ChartPanel = () => (
  <section className="mx-px border border-[#716f64] border-b-2">
    <ChartToolbar />
    <div className="flex">
      <div className="relative min-w-0 flex-1">
        <PriceChart />
        <div className="absolute top-[3px] left-[26px] flex items-center text-[#008000]">
          <CfdBadge />
          <span>SP500.I</span>
          <Caret className="ml-2" />
        </div>
        <button aria-label="Maximizar gráfico" className="absolute top-1 right-[18px]"><MaximizeIcon /></button>
        <div className="h-px bg-[#008000]" />
        <div className="relative">
          <CciChart />
          <button className="absolute top-[1px] left-[26px] flex items-center gap-[6px]">CCI 10 <Caret /></button>
          <div className="absolute top-[3px] right-[5px] flex gap-1 text-[#008000]">
            <button aria-label="Maximizar indicador"><MaximizeIcon /></button>
            <button aria-label="Remover indicador">
              <svg width="9" height="8" viewBox="0 0 9 8" stroke="currentColor" strokeWidth="2.200"><path d="M1 0l7 8M8 0L1 8" /></svg>
            </button>
          </div>
        </div>
      </div>
      <PriceAxis />
    </div>
    <DateAxis />
  </section>
);

const ChartTabs = () => (
  <nav className="mx-px mt-px flex h-[23px] border-t border-b border-t-[#716f64] border-b-[#aca899] bg-[#f8f7ef] pl-[6px]">
    <button className="-mt-px flex w-[317px] items-center gap-[3px] border-r border-b border-[#716f64] bg-[#ece9d8] pl-[6px] font-bold whitespace-nowrap">
      <WaveIcon color="#222" />
      SP500.I, CFD de Índices, Diário, Hora Local (TMG+0)
    </button>
    <button className="my-[2px] flex w-[224px] items-center gap-[3px] border-r border-[#716f64] pl-[18px] whitespace-nowrap">
      <WaveIcon color="#222" />
      SP500.I, CFD de Índices, 10 Minutos
    </button>
  </nav>
);

const StatusBar = () => (
  <footer className="mt-[2px] flex h-[23px] items-stretch border-t border-white leading-[21px]">
    <span className="flex-1 pl-[3px]">Last Successful Login: 29-Abr-2009 19:41:21 (GMT). Last Login: Successful.</span>
    <span className="my-px flex w-[26px] items-center justify-center border-l border-[#aca899]">
      <svg width="15" height="14" viewBox="0 0 15 14" fill="#fff" stroke="#111">
        <circle cx="4.500" cy="4" r="2.500" fill="#f0d050" /><path d="M1 12.500V9l2-2h3l2 2v3.500z" /><path d="M4.500 8v4" stroke="#2030d0" />
        <path d="M9 1.500h5.500v4H11L9 7z" />
      </svg>
    </span>
    <span className="my-px w-[25px] border-l border-[#aca899]" />
    <span className="my-px flex w-[25px] items-center justify-center border-l border-[#aca899]">
      <svg width="16" height="12" viewBox="0 0 16 12" fill="none" stroke="#111" strokeWidth="1.300">
        <path d="M0 10h4l2-2M10 4l2-2h4" /><ellipse cx="8" cy="6" rx="3.500" ry="2.500" transform="rotate(-45 8 6)" fill="#bbb" /><path d="M6 4l4 4" />
      </svg>
    </span>
    <span className="my-px flex w-[25px] items-center justify-center border-l border-[#aca899]">
      <svg width="11" height="12" viewBox="0 0 11 12" fill="none" stroke="#222">
        <path d="M3 5V2.500l1.500-2h2l1.500 2V5" strokeWidth="1.500" /><path d="M0.500 5.500h10v6h-10z" fill="#ddd" /><path d="M2 8h7M2 10h7" stroke="#999" />
        <path d="M5 7h1v3H5z" fill="#000" stroke="none" />
      </svg>
    </span>
    <span className="my-px w-24 border-l border-[#aca899] pl-[5px] leading-[18px]">Ao vivo</span>
    <span className="my-px w-[140px] border-l border-[#aca899] pl-[2px] leading-5">Português</span>
  </footer>
);

const App: React.FC = () => {
  return (
    <div className="bg-[#ece9d8] text-[11px] leading-[15px] text-black font-['DejaVu_Sans_Condensed','DejaVu_Sans',sans-serif]">
      <TitleBar />
      <nav className="flex h-[23px] items-center pl-[5px]">
        {MENU.map(([before, key, after]) => (
          <button key={before + key + after} className="px-[9px]">{before}<u>{key}</u>{after}</button>
        ))}
      </nav>
      <MainToolbar />
      <ViewTabs />

      <div className="mx-px mt-[2px] flex h-[17px] items-center justify-between border border-[#716f64] pl-1">
        <h2 className="flex items-center gap-[5px]">
          <svg width="11" height="11" viewBox="0 0 11 11" stroke="#333" strokeWidth="0.700">
            <path d="M0 5l3.500-4L7 5z" fill="#10c020" /><path d="M4 6h7l-3.500 4z" fill="#f02020" />
          </svg>
          CFDs / Futuros
        </h2>
        <PanelButtons />
      </div>
      <div className="h-px" />
      <QuotesPanel />

      <div className="my-1 h-[5px] bg-[#a3c2f6]" />

      <div className="mx-px mt-[6px] flex h-[17px] items-center justify-between border border-[#0048c8] bg-[#0055e5] pl-1 text-white">
        <h2 className="flex items-center gap-[5px]">
          <WaveIcon color="#111" />
          SP500.I, CFD de Índices, Diário, Hora Local (TMG+0)
        </h2>
        <PanelButtons />
      </div>
      <div className="h-px" />
      <ChartPanel />
      <ChartTabs />
      <StatusBar />
      <div className="h-[3px] bg-[#2a7ae8]" />
    </div>
  );
};

export default App;
